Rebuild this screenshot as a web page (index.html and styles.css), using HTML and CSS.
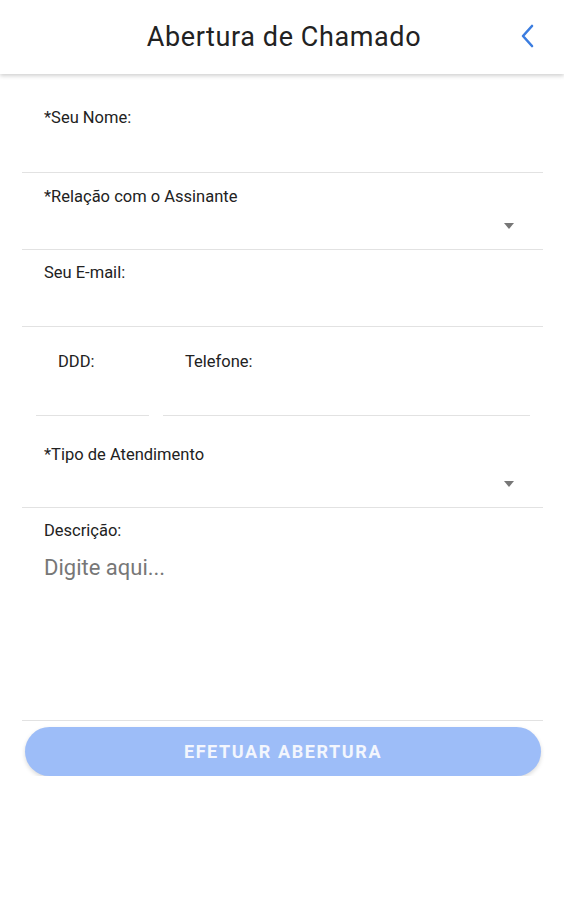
FILE: index.html
```html
<!DOCTYPE html>
<html lang="pt-BR">
<head>
    <meta charset="UTF-8">
    <meta name="viewport" content="width=device-width, initial-scale=1.0">
    <title>Abertura de Chamado</title>
    <link rel="stylesheet" href="styles.css">
</head>
<body>

<header class="topbar">
    <h1 class="topbar-title">Abertura de Chamado</h1>
    <button class="back-btn" type="button" aria-label="Voltar">
        <svg width="16" height="24" viewBox="0 0 16 24">
            <path d="M12 2 L3 12 L12 22" fill="none" stroke="#3b7de0" stroke-width="2.6" stroke-linecap="round" stroke-linejoin="round"/>
        </svg>
    </button>
</header>

<form class="form" action="#" method="post">
    <!-- Nome -->
    <div class="field field-name">
        <label class="field-label">*Seu Nome:</label>
        <div class="field-input"></div>
    </div>

    <!-- Relação -->
    <div class="field field-relacao">
        <label class="field-label">*Relação com o Assinante</label>
        <div class="field-select"><span class="caret"></span></div>
    </div>

    <!-- Email -->
    <div class="field field-email">
        <label class="field-label">Seu E-mail:</label>
        <div class="field-input"></div>
    </div>

    <!-- Telefone -->
    <div class="phone-row">
        <div class="phone-col ddd">
            <label class="field-label">DDD:</label>
            <div class="phone-input"></div>
        </div>
        <div class="phone-col tel">
            <label class="field-label">Telefone:</label>
            <div class="phone-input"></div>
        </div>
    </div>

    <!-- Tipo -->
    <div class="field field-tipo">
        <label class="field-label">*Tipo de Atendimento</label>
        <div class="field-select"><span class="caret"></span></div>
    </div>

    <!-- Descrição -->
    <div class="field field-desc">
        <label class="field-label">Descrição:</label>
        <div class="placeholder">Digite aqui...</div>
    </div>

    <button class="submit-btn" type="submit">EFETUAR ABERTURA</button>
</form>

</body>
</html>
```

FILE: styles.css
```css
body {
    margin: 0;
    padding: 0;
    background-color: #fff;
    font-family: Roboto, "Liberation Sans", Arial, sans-serif;
    color: #222;
}

.topbar {
    height: 74px;
    display: flex;
    align-items: center;
    justify-content: center;
    padding-left: 4px;
    position: relative;
    background-color: #fff;
    box-shadow: 0 2px 4px rgba(0, 0, 0, 0.18);
}

.topbar-title {
    margin: 0;
    font-size: 27px;
    font-weight: 400;
    color: #222;
    letter-spacing: 0.6px;
}

.back-btn {
    position: absolute;
    right: 28px;
    top: 24px;
    padding: 0;
    border: none;
    background: none;
    display: flex;
}

.form {
    margin: 2px 21px 0 22px;
    display: flex;
    flex-direction: column;
}

.field {
    display: flex;
    flex-direction: column;
    padding-left: 22px;
    border-bottom: 1px solid #e2e2e2;
}

.field-label {
    font-size: 16.5px;
    line-height: 18px;
    color: #222;
}

.field-name { padding-top: 33px; }
.field-name .field-input { height: 45px; }

.field-relacao { padding-top: 15px; }

.field-email { padding-top: 14px; }
.field-email .field-input { height: 44px; }

.field-tipo { padding-top: 30px; }

.field-select {
    height: 43px;
    display: flex;
    align-items: center;
    justify-content: flex-end;
    padding-right: 29px;
}

.caret {
    width: 0;
    height: 0;
    margin-top: -4px;
    border-left: 5.5px solid transparent;
    border-right: 5.5px solid transparent;
    border-top: 6px solid #777;
}

.phone-row {
    display: flex;
    gap: 14px;
    padding: 26px 13px 0 14px;
}

.phone-col {
    display: flex;
    flex-direction: column;
}

.phone-col .field-label {
    padding-left: 22px;
}

.ddd { width: 113px; }
.tel { flex: 1; }

.phone-input {
    height: 44px;
    border-bottom: 1px solid #e2e2e2;
}

.field-desc {
    padding-top: 14px;
    height: 198px;
}

.placeholder {
    margin-top: 15px;
    font-size: 22px;
    line-height: 26px;
    color: #777;
}

.submit-btn {
    margin: 6px 2px 0 3px;
    height: 49px;
    border: none;
    border-radius: 25px;
    background-color: #9dbdf8;
    color: #f3f6fd;
    font-family: Roboto, "Liberation Sans", Arial, sans-serif;
    font-size: 18px;
    font-weight: 700;
    letter-spacing: 1.6px;
    box-shadow: 0 2px 4px rgba(0, 0, 0, 0.15);
    cursor: pointer;
}
```
